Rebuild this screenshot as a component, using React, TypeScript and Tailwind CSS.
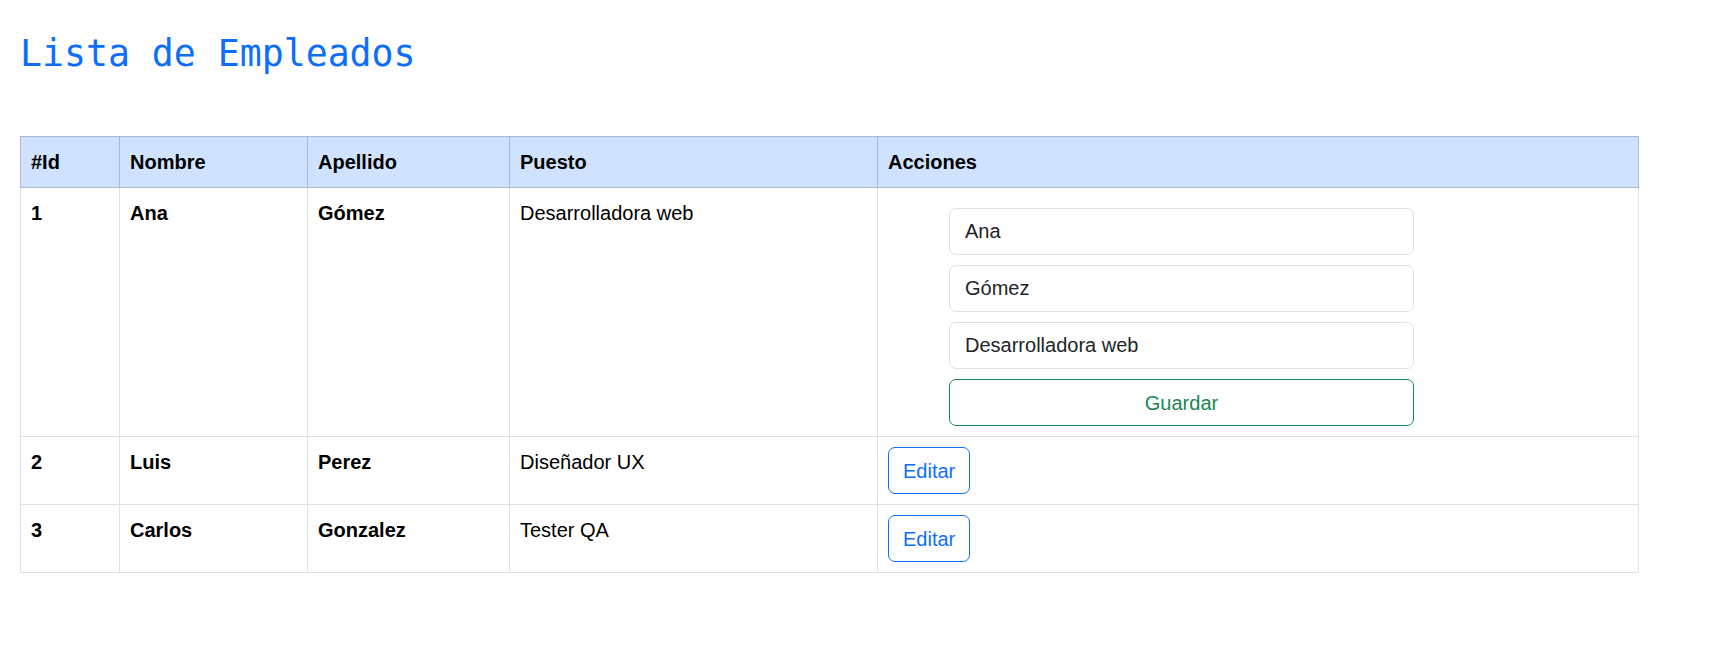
import React, { useState } from 'react';

interface Employee {
  id: number;
  nombre: string;
  apellido: string;
  puesto: string;
}

const initialEmployees: Employee[] = [
  { id: 1, nombre: 'Ana', apellido: 'Gómez', puesto: 'Desarrolladora web' },
  { id: 2, nombre: 'Luis', apellido: 'Perez', puesto: 'Diseñador UX' },
  { id: 3, nombre: 'Carlos', apellido: 'Gonzalez', puesto: 'Tester QA' },
];

const cell = 'border border-[#dee2e6] px-[10px] py-[10px] align-top leading-[30px]';
const headCell = 'border border-[#a9b8d3] px-[10px] py-[10px] text-left font-bold leading-[30px]';
const inputClass =
  'block w-full h-[47px] px-[15px] border border-[#dee2e6] rounded-[7px] bg-white text-[20px] text-[#212529] outline-none focus:border-[#86b7fe]';

export default function App() {
  const [employees, setEmployees] = useState<Employee[]>(initialEmployees);
  const [editingId, setEditingId] = useState<number | null>(1);
  const [draft, setDraft] = useState<Employee>(initialEmployees[0]);

  const startEdit = (emp: Employee) => {
    setEditingId(emp.id);
    setDraft(emp);
  };

  const handleChange = (e: React.ChangeEvent<HTMLInputElement>) => {
    const { name, value } = e.target;
    setDraft((prev) => ({ ...prev, [name]: value }));
  };

  const handleSave = (e: React.FormEvent) => {
    e.preventDefault();
    setEmployees((prev) => prev.map((emp) => (emp.id === draft.id ? draft : emp)));
    setEditingId(null);
  };

  return (
    <div className="min-h-screen bg-white px-[20px] pt-[32px] font-['Liberation_Sans',Arial,sans-serif] text-[20px] text-black">
      <h1 className="font-['DejaVu_Sans_Mono','Liberation_Mono',monospace] text-[36.5px] leading-[43px] text-[#0d6efd]">
        Lista de Empleados
      </h1>

      <table className="mt-[61px] w-[1619px] border-collapse">
        <thead>
          <tr className="bg-[#cfe2ff]">
            <th className={`${headCell} w-[99px]`}>#Id</th>
            <th className={`${headCell} w-[188px]`}>Nombre</th>
            <th className={`${headCell} w-[202px]`}>Apellido</th>
            <th className={`${headCell} w-[368px]`}>Puesto</th>
            <th className={headCell}>Acciones</th>
          </tr>
        </thead>
        <tbody>
          {employees.map((emp) => (
            <tr key={emp.id}>
              <td className={`${cell} font-bold`}>{emp.id}</td>
              <td className={`${cell} font-bold`}>{emp.nombre}</td>
              <td className={`${cell} font-bold`}>{emp.apellido}</td>
              <td className={cell}>{emp.puesto}</td>
              <td className={cell}>
                {editingId === emp.id ? (
                  <form onSubmit={handleSave} className="mt-[10px] ml-[61px] flex w-[465px] flex-col gap-[10px]">
                    <input name="nombre" value={draft.nombre} onChange={handleChange} className={inputClass} />
                    <input name="apellido" value={draft.apellido} onChange={handleChange} className={inputClass} />
                    <input name="puesto" value={draft.puesto} onChange={handleChange} className={inputClass} />
                    <button
                      type="submit"
                      className="h-[47px] w-full rounded-[7px] border border-[#198754] bg-white text-[20px] text-[#198754] hover:bg-[#198754] hover:text-white"
                    >
                      Guardar
                    </button>
                  </form>
                ) : (
                  <button
                    type="button"
                    onClick={() => startEdit(emp)}
                    className="block h-[47px] rounded-[7px] border border-[#0d6efd] px-[14px] text-[20px] leading-[30px] text-[#0d6efd] hover:bg-[#0d6efd] hover:text-white"
                  >
                    Editar
                  </button>
                )}
              </td>
            </tr>
          ))}
        </tbody>
      </table>
    </div>
  );
}
